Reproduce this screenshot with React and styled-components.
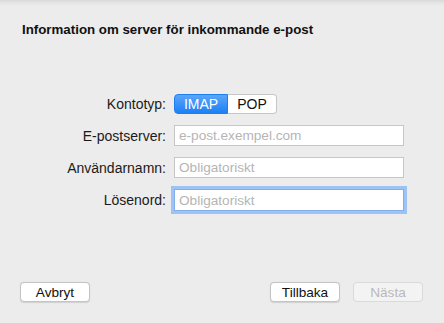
import React from "react";
import styled, { createGlobalStyle } from "styled-components";

const GlobalStyle = createGlobalStyle`
  html, body {
    margin: 0;
    padding: 0;
    background: #ececec;
  }
  body {
    font-family: "Liberation Sans", Arial, sans-serif;
    color: #1d1d1d;
  }
`;

const Window = styled.div`
  width: 444px;
  height: 323px;
  display: flex;
  flex-direction: column;
  background: linear-gradient(#d9d9d9 0px, #e6e6e6 3px, #ececec 6px);
  box-sizing: border-box;
`;

const Heading = styled.h1`
  margin: 0;
  padding: 22px 0 0 22px;
  font-size: 13.3px;
  line-height: 16px;
  font-weight: bold;
  color: #111;
`;

const Form = styled.div`
  display: grid;
  grid-template-columns: 166px 230px;
  column-gap: 8px;
  row-gap: 11px;
  margin-top: 56px;
  align-items: center;
`;

const Label = styled.label`
  text-align: right;
  font-size: 14px;
  color: #1a1a1a;
`;

const Segmented = styled.div`
  display: flex;
  height: 20px;
`;

const Segment = styled.button`
  font-family: inherit;
  font-size: 14px;
  height: 20px;
  padding: 0;
  width: ${(p) => p.$width}px;
  border: 1px solid ${(p) => (p.$active ? "#1d7ef0" : "#c6c6c6")};
  background: ${(p) =>
    p.$active ? "linear-gradient(#5aa6fb, #1c80f5)" : "#ffffff"};
  color: ${(p) => (p.$active ? "#fff" : "#111")};
  border-radius: ${(p) => (p.$first ? "4px 0 0 4px" : "0 4px 4px 0")};
  border-left-width: ${(p) => (p.$first ? "1px" : "0")};
  box-sizing: border-box;
`;

const Input = styled.input`
  width: 230px;
  height: ${(p) => (p.$focused ? "22px" : "21px")};
  box-sizing: border-box;
  border: 1px solid ${(p) => (p.$focused ? "#84aeea" : "#c6c6c6")};
  box-shadow: ${(p) => (p.$focused ? "0 0 0 3px #9dc3f4" : "none")};
  background: #fff;
  padding: 0 4px;
  font-family: inherit;
  font-size: 13.6px;
  outline: none;
  &::placeholder {
    color: #b5b5b5;
  }
`;

const Spacer = styled.div`
  flex: 1;
`;

const Footer = styled.div`
  display: flex;
  align-items: center;
  padding: 0 21px 21px 20px;
  gap: 13px;
`;

const Button = styled.button`
  width: 70px;
  height: 20px;
  box-sizing: border-box;
  border: 1px solid ${(p) => (p.disabled ? "#dadada" : "#c4c4c4")};
  border-radius: 4px;
  background: ${(p) => (p.disabled ? "#f3f3f3" : "#fff")};
  color: ${(p) => (p.disabled ? "#b9b9b9" : "#111")};
  font-family: inherit;
  font-size: 13.6px;
  padding: 0;
  box-shadow: ${(p) => (p.disabled ? "none" : "0 0.5px 1px rgba(0,0,0,0.12)")};
`;

const Gap = styled.div`
  flex: 1;
`;

export default function App() {
  return (
    <Window>
      <GlobalStyle />
      <Heading>Information om server för inkommande e-post</Heading>
      <Form>
        <Label>Kontotyp:</Label>
        <Segmented>
          <Segment $active $first $width={54}>IMAP</Segment>
          <Segment $width={49}>POP</Segment>
        </Segmented>
        <Label>E-postserver:</Label>
        <Input placeholder="e-post.exempel.com" />
        <Label>Användarnamn:</Label>
        <Input placeholder="Obligatoriskt" />
        <Label>Lösenord:</Label>
        <Input type="password" placeholder="Obligatoriskt" $focused />
      </Form>
      <Spacer />
      <Footer>
        <Button>Avbryt</Button>
        <Gap />
        <Button>Tillbaka</Button>
        <Button disabled>Nästa</Button>
      </Footer>
    </Window>
  );
}
